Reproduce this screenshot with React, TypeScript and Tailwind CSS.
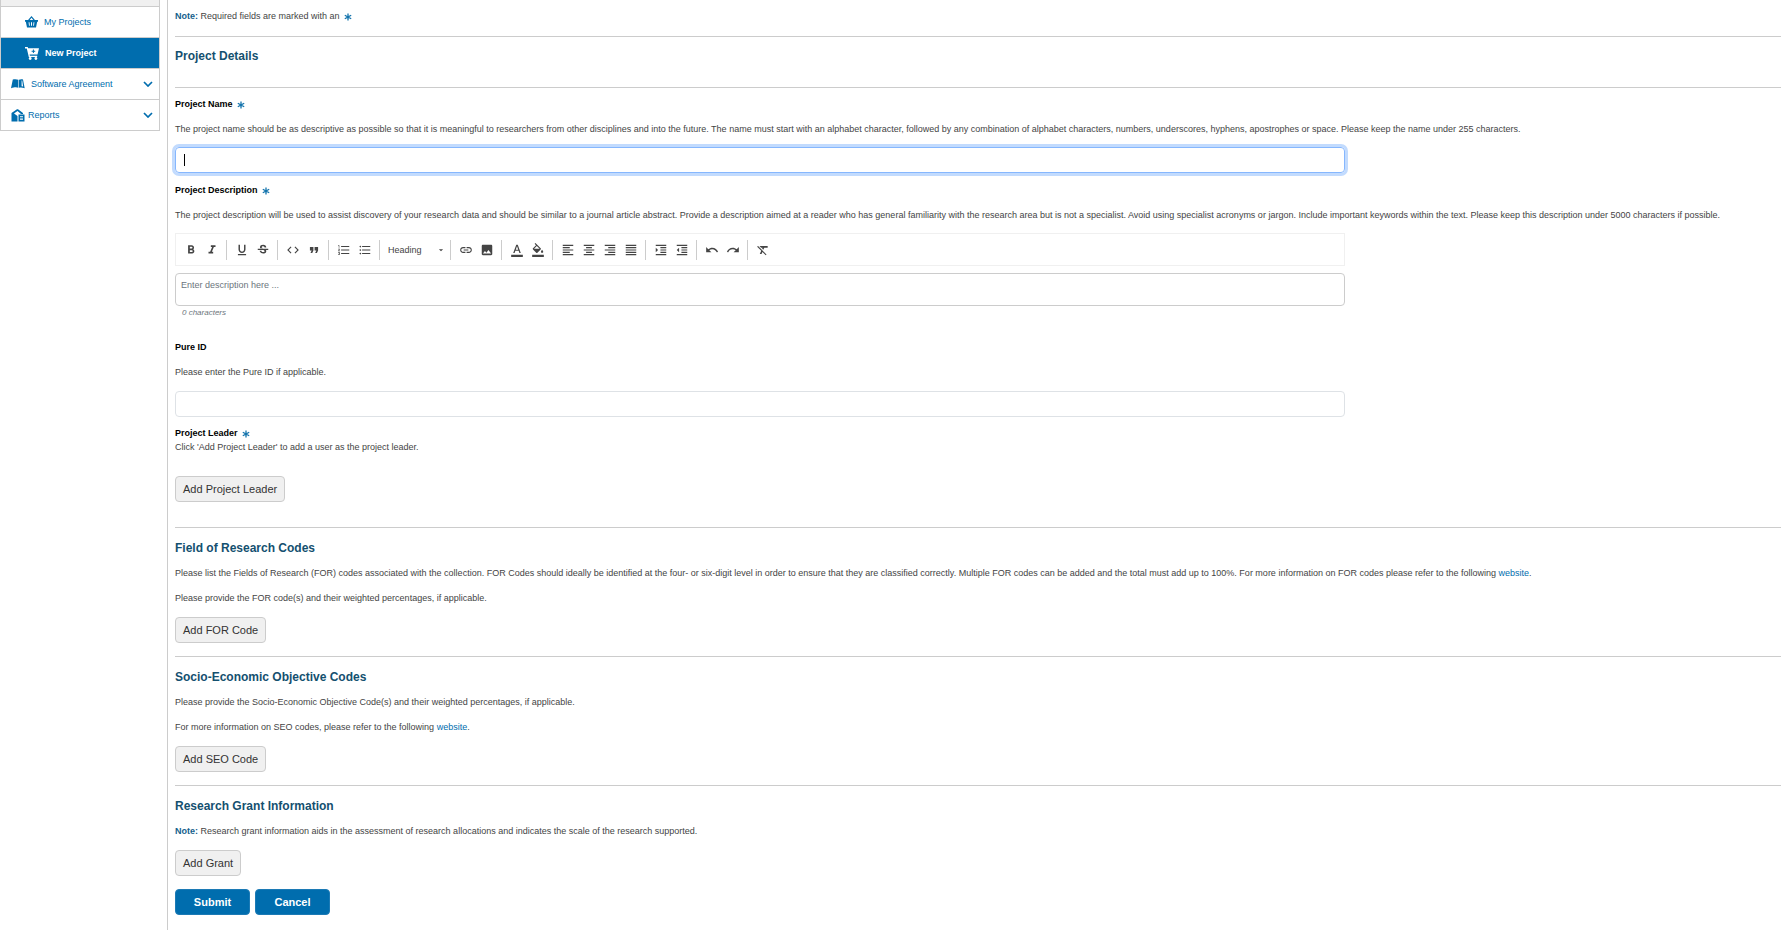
import React from 'react';
import {
    MdArrowDropDown,
    MdCode,
    MdFormatAlignCenter,
    MdFormatAlignJustify,
    MdFormatAlignLeft,
    MdFormatAlignRight,
    MdFormatBold,
    MdFormatClear,
    MdFormatColorFill,
    MdFormatColorText,
    MdFormatIndentDecrease,
    MdFormatIndentIncrease,
    MdFormatItalic,
    MdFormatListBulleted,
    MdFormatListNumbered,
    MdFormatQuote,
    MdFormatUnderlined,
    MdImage,
    MdLink,
    MdRedo,
    MdStrikethroughS,
    MdUndo,
} from 'react-icons/md';

type Tool = { label: string; icon: React.ReactNode };

const toolGroups: Tool[][] = [
    [
        { label: 'Bold', icon: <MdFormatBold /> },
        { label: 'Italic', icon: <MdFormatItalic /> },
    ],
    [
        { label: 'Underline', icon: <MdFormatUnderlined /> },
        { label: 'Strike', icon: <MdStrikethroughS /> },
    ],
    [
        { label: 'Code', icon: <MdCode /> },
        { label: 'Blockquote', icon: <MdFormatQuote /> },
    ],
    [
        { label: 'Ordered list', icon: <MdFormatListNumbered /> },
        { label: 'Bullet list', icon: <MdFormatListBulleted /> },
    ],
];

const toolGroupsAfterHeading: Tool[][] = [
    [
        { label: 'Insert link', icon: <MdLink /> },
        { label: 'Insert image', icon: <MdImage /> },
    ],
    [
        { label: 'Text color', icon: <MdFormatColorText /> },
        { label: 'Background color', icon: <MdFormatColorFill /> },
    ],
    [
        { label: 'Align left', icon: <MdFormatAlignLeft /> },
        { label: 'Align center', icon: <MdFormatAlignCenter /> },
        { label: 'Align right', icon: <MdFormatAlignRight /> },
        { label: 'Justify', icon: <MdFormatAlignJustify /> },
    ],
    [
        { label: 'Indent', icon: <MdFormatIndentIncrease /> },
        { label: 'Outdent', icon: <MdFormatIndentDecrease /> },
    ],
    [
        { label: 'Undo', icon: <MdUndo /> },
        { label: 'Redo', icon: <MdRedo /> },
    ],
    [{ label: 'Clear format', icon: <MdFormatClear /> }],
];

const Separator = () => <span className="mx-1 h-5 w-px bg-[#ccc]" />;

const ToolGroup = ({ tools }: { tools: Tool[] }) => (
    <>
        {tools.map((tool) => (
            <button
                key={tool.label}
                type="button"
                aria-label={tool.label}
                className="flex h-5 w-[21px] items-center justify-center text-sm text-[#444]"
            >
                {tool.icon}
            </button>
        ))}
    </>
);

const Required = () => (
    <svg viewBox="0 0 8 8" className="ml-0.5 inline-block size-2" aria-label="required" role="img">
        <path d="M4 .5v7M.8 2.2l6.4 3.6M7.2 2.2L.8 5.8" stroke="#1474ad" strokeWidth="1.3" fill="none" />
    </svg>
);

const Chevron = () => (
    <svg viewBox="0 0 10 6" className="ml-auto h-1.5 w-2.5" fill="none" stroke="#006dae" strokeWidth="1.7">
        <path d="M1 1l4 4 4-4" />
    </svg>
);

const BasketIcon = () => (
    <svg viewBox="0 0 13 12" className="h-3 w-[13px]" fill="currentColor" fillRule="evenodd">
        <path d="M6.5 0L9.9 4H13v1.7h-.8L11 11.5H2L.8 5.7H0V4h3.1zM6.5 1.8L4.7 4h3.6zM3.6 6.2l.4 3.6h.9l-.4-3.6zM6 6.2v3.6h1V6.2zM8.5 6.2l-.4 3.6H9l.4-3.6z" />
    </svg>
);

const CartIcon = () => (
    <svg viewBox="0 0 14 13" className="h-[13px] w-3.5" fill="currentColor" fillRule="evenodd">
        <path d="M0 0h2.7l.4 1.2H14l-1.5 6.3H4.6l.3 1.2h7.3V10H3.8L1.8 1.4H0zM7.9 2.4v1.3H6.6v1h1.3V6h1V4.7h1.3v-1H8.9V2.4z" />
        <circle cx="5.2" cy="11.5" r="1.4" />
        <circle cx="10.9" cy="11.5" r="1.4" />
    </svg>
);

const BookIcon = () => (
    <svg viewBox="0 0 14 10" className="h-2.5 w-3.5" fill="currentColor" fillRule="evenodd">
        <path d="M1.8.6C3.6-.1 5.600 0 7.400.8v8c-2-.8-4-.7-7.400.5z" />
        <path d="M8 .8C9.300 0 11 0 12 .6L13.700 9.300C11.500 8.500 9.800 8.300 8 8.800zM10.600 1.400v5.900l1.500.3-.9-6z" />
    </svg>
);

const ReportsIcon = () => (
    <svg viewBox="0 0 14 13" className="h-[13px] w-3.5" fill="currentColor" fillRule="evenodd">
        <path d="M.5 4L6 .3h1L12 4v1h-2L6.500 2 3 4.500 6.500 7v5.500H.5z" />
        <path d="M7.500 5.500H13.500V12.500H7.500zM9 7.200v1.100h3V7.200zM9 9.600v1.100h3V9.600z" />
    </svg>
);

const GreyButton = ({ children }: { children: React.ReactNode }) => (
    <button
        type="button"
        className="block h-[26px] rounded border border-[#ccc] bg-[#f0f0f0] px-[7px] text-[11px] leading-4 text-[#333]"
    >
        {children}
    </button>
);

const BlueButton = ({ children, type }: { children: React.ReactNode; type: 'submit' | 'button' }) => (
    <button
        type={type}
        className="h-[26px] w-[75px] rounded border border-[#1c7ab5] bg-[#006dae] text-[11px] font-bold leading-4 text-white"
    >
        {children}
    </button>
);

const SectionTitle = ({ children }: { children: React.ReactNode }) => (
    <h2 className="text-xs font-bold leading-4 text-[#14506f]">{children}</h2>
);

const navItem = 'flex h-[31px] items-center border-t border-[#ccc]';

const Sidebar = () => (
    <nav className="w-40 shrink-0 text-[#006dae]">
        <div className="border-x border-b border-[#ccc]">
            <div className="h-1.5 bg-[#f0f0f0]" />
            <a href="#my-projects" className={`${navItem} gap-1.5 pl-6`}>
                <BasketIcon />
                My Projects
            </a>
            <a href="#new-project" className={`${navItem} gap-1.5 bg-[#006dae] pl-6 font-bold text-white`}>
                <CartIcon />
                New Project
            </a>
            <a href="#software-agreement" className={`${navItem} gap-1.5 pl-2.5 pr-1.5`}>
                <BookIcon />
                Software Agreement
                <Chevron />
            </a>
            <a href="#reports" className={`${navItem} gap-[3px] pl-2.5 pr-1.5`}>
                <ReportsIcon />
                Reports
                <Chevron />
            </a>
        </div>
    </nav>
);

const App = () => {
    return (
        <div className="flex min-h-screen bg-white font-['Liberation_Sans',Arial,sans-serif] text-[9px] leading-[14px] text-[#444]">
            <Sidebar />
            <main className="ml-[7px] min-w-0 grow border-l border-[#ccc] pl-[7px]">
                <form>
                    <p className="pt-[9px]">
                        <strong className="text-[#14608c]">Note:</strong> Required fields are marked with an <Required />
                    </p>

                    <hr className="mt-[13px] border-[#ccc]" />
                    <div className="pb-[23px] pt-[11px]">
                        <SectionTitle>Project Details</SectionTitle>
                    </div>
                    <hr className="border-[#ccc]" />

                    <label htmlFor="project-name" className="mt-[9px] block font-bold text-black">
                        Project Name <Required />
                    </label>
                    <p className="mt-[11px]">
                        The project name should be as descriptive as possible so that it is meaningful to researchers from other disciplines and into the future. The name must start with an alphabet character, followed by any combination of alphabet characters, numbers, underscores, hyphens, apostrophes or space. Please keep the name under 255 characters.
                    </p>
                    <div className="relative mt-[11px] max-w-[1170px]">
                        <input
                            id="project-name"
                            autoFocus
                            className="block h-[26px] w-full rounded border border-[#86b7fe] px-2 text-xs text-black caret-transparent shadow-[0_0_0_3px_#c2dbfe] outline-none"
                        />
                        <span className="pointer-events-none absolute inset-y-[7px] left-[9px] w-px bg-black" />
                    </div>

                    <label htmlFor="description" className="mt-2.5 block font-bold text-black">
                        Project Description <Required />
                    </label>
                    <p className="mt-[11px]">
                        The project description will be used to assist discovery of your research data and should be similar to a journal article abstract. Provide a description aimed at a reader who has general familiarity with the research area but is not a specialist. Avoid using specialist acronyms or jargon. Include important keywords within the text. Please keep this description under 5000 characters if possible.
                    </p>
                    <div className="max-w-[1170px]">
                        <div className="mt-[11px] flex h-[33px] items-center border border-[#f0f0f0] pl-1">
                            {toolGroups.map((tools) => (
                                <React.Fragment key={tools[0].label}>
                                    <ToolGroup tools={tools} />
                                    <Separator />
                                </React.Fragment>
                            ))}
                            <button type="button" className="flex h-5 w-[62px] items-center justify-between pl-1 text-[9px]">
                                Heading
                                <MdArrowDropDown className="size-2.5" />
                            </button>
                            {toolGroupsAfterHeading.map((tools) => (
                                <React.Fragment key={tools[0].label}>
                                    <Separator />
                                    <ToolGroup tools={tools} />
                                </React.Fragment>
                            ))}
                        </div>
                        <textarea
                            id="description"
                            placeholder="Enter description here ..."
                            className="mt-[7px] block h-[33px] w-full resize-none rounded-sm border border-[#ccc] px-[5px] py-1 placeholder:text-[#6c757d]"
                        />
                    </div>
                    <p className="pl-[7px] text-[8px] italic text-[#6c757d]">0 characters</p>

                    <label htmlFor="pure-id" className="mt-5 block font-bold text-black">
                        Pure ID
                    </label>
                    <p className="mt-[11px]">Please enter the Pure ID if applicable.</p>
                    <div className="mt-3 max-w-[1170px]">
                        <input
                            id="pure-id"
                            className="block h-[26px] w-full rounded border border-[#dee2e6] px-2 text-xs text-black"
                        />
                    </div>

                    <h3 className="mt-[9px] font-bold text-black">
                        Project Leader <Required />
                    </h3>
                    <p className="mb-[22px]">Click &apos;Add Project Leader&apos; to add a user as the project leader.</p>
                    <GreyButton>Add Project Leader</GreyButton>

                    <hr className="mb-3 mt-[25px] border-[#ccc]" />
                    <SectionTitle>Field of Research Codes</SectionTitle>
                    <p className="mt-2.5">
                        Please list the Fields of Research (FOR) codes associated with the collection. FOR Codes should ideally be identified at the four- or six-digit level in order to ensure that they are classified correctly. Multiple FOR codes can be added and the total must add up to 100%. For more information on FOR codes please refer to the following{' '}
                        <a href="#for-codes" className="text-[#006dae]">website</a>.
                    </p>
                    <p className="mb-3 mt-[11px]">Please provide the FOR code(s) and their weighted percentages, if applicable.</p>
                    <GreyButton>Add FOR Code</GreyButton>

                    <hr className="mb-3 mt-[13px] border-[#ccc]" />
                    <SectionTitle>Socio-Economic Objective Codes</SectionTitle>
                    <p className="mt-2.5">
                        Please provide the Socio-Economic Objective Code(s) and their weighted percentages, if applicable.
                    </p>
                    <p className="mb-3 mt-[11px]">
                        For more information on SEO codes, please refer to the following{' '}
                        <a href="#seo-codes" className="text-[#006dae]">website</a>.
                    </p>
                    <GreyButton>Add SEO Code</GreyButton>

                    <hr className="mb-3 mt-[13px] border-[#ccc]" />
                    <SectionTitle>Research Grant Information</SectionTitle>
                    <p className="mb-3 mt-2.5">
                        <strong className="text-[#14608c]">Note:</strong> Research grant information aids in the assessment of research allocations and indicates the scale of the research supported.
                    </p>
                    <GreyButton>Add Grant</GreyButton>

                    <div className="mt-[13px] flex gap-[5px]">
                        <BlueButton type="submit">Submit</BlueButton>
                        <BlueButton type="button">Cancel</BlueButton>
                    </div>
                </form>
            </main>
        </div>
    );
};

export default App;
